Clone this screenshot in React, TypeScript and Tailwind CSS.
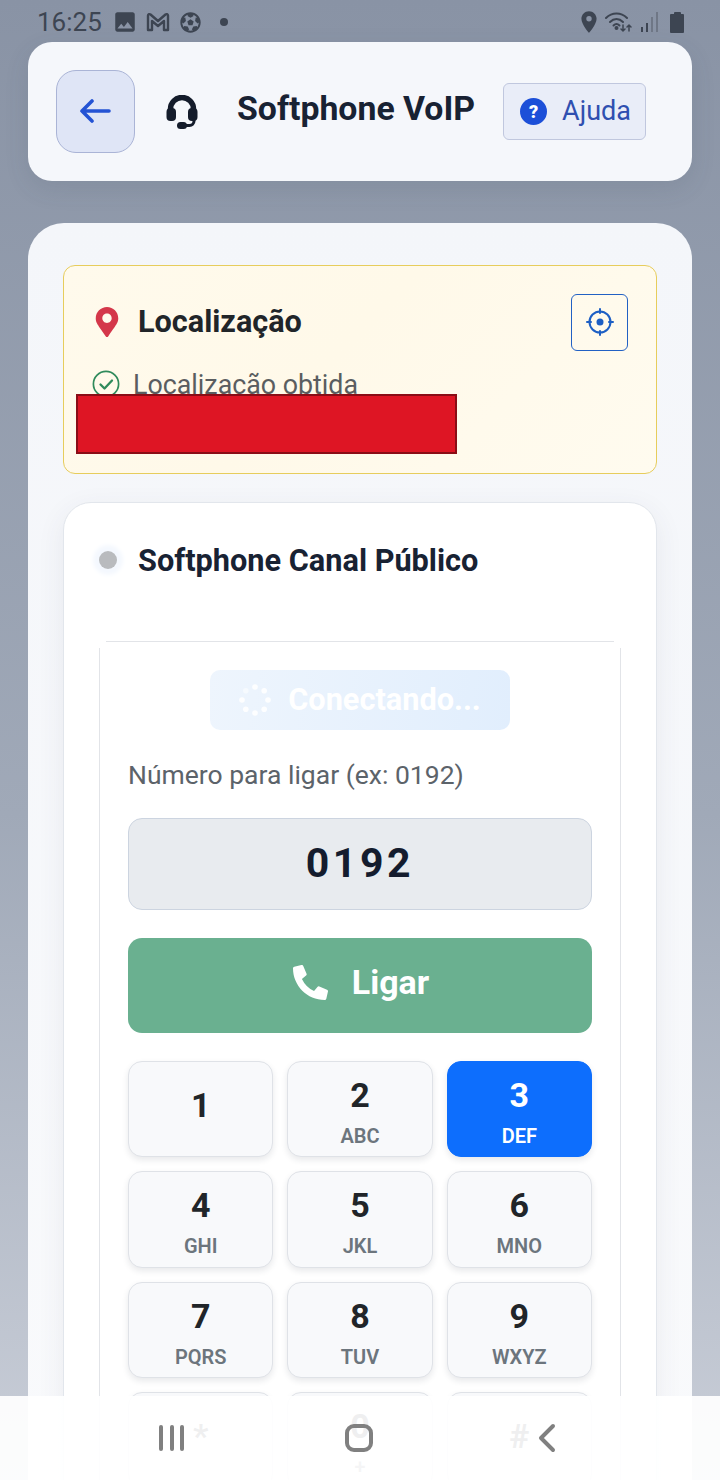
import { ChevronLeft } from "lucide-react";
import { FaFutbol, FaMapMarkerAlt, FaPhoneAlt } from "react-icons/fa";
import { MdImage, MdLocationOn } from "react-icons/md";

const keys = [
  ["1", ""],
  ["2", "ABC"],
  ["3", "DEF"],
  ["4", "GHI"],
  ["5", "JKL"],
  ["6", "MNO"],
  ["7", "PQRS"],
  ["8", "TUV"],
  ["9", "WXYZ"],
  ["*", ""],
  ["0", "+"],
  ["#", ""],
];

function StatusBar() {
  return (
    <div className="flex h-[42px] items-start justify-between pl-[37px] pr-[36px] pt-[8px] text-[#3d4552]">
      <div className="flex items-center">
        <span className="text-[26px] leading-[28px]">16:25</span>
        <MdImage className="ml-[10px] h-[26px] w-[26px]" aria-hidden />
        <svg viewBox="0 0 24 20" className="ml-[8px] h-[20px] w-[24px]" fill="none" stroke="currentColor" strokeWidth="2.4" strokeLinejoin="round" aria-hidden>
          <path d="M2 18V3.5a1.5 1.5 0 0 1 2.5-1L12 9l7.5-6.5a1.5 1.5 0 0 1 2.5 1V18h-4V9l-6 5-6-5v9z" />
        </svg>
        <FaFutbol className="ml-[10px] h-[21px] w-[21px]" aria-hidden />
        <span className="ml-[19px] h-[8px] w-[8px] rounded-full bg-[#3d4552]" />
      </div>
      <div className="flex items-center pt-[1px]">
        <MdLocationOn className="h-[26px] w-[26px]" aria-hidden />
        <svg viewBox="0 0 28 22" className="ml-[3px] h-[22px] w-[28px]" fill="none" stroke="currentColor" strokeWidth="2" strokeLinecap="round" aria-hidden>
          <path d="M1 7c6-6 15-6 21 0" />
          <path d="M5 11c4-4 9-4 13 0" />
          <path d="M8.500 14.500c2-2 4-2 6 0" />
          <circle cx="11.500" cy="17" r="1" fill="currentColor" />
          <path d="M18 14v6M16 18l2 2 2-2" strokeWidth="1.500" />
          <path d="M24 20v-6M22 16l2-2 2 2" strokeWidth="1.500" />
        </svg>
        <svg viewBox="0 0 20 22" className="ml-[7px] h-[22px] w-[20px]" aria-hidden>
          <rect x="1" y="16" width="2" height="5" fill="#3d4552" />
          <rect x="6" y="12" width="2" height="9" fill="#3d4552" />
          <rect x="11" y="6" width="2" height="15" fill="#6f7786" />
          <rect x="16" y="1" width="2" height="20" fill="#6f7786" />
        </svg>
        <div className="ml-[10px] flex flex-col items-center">
          <span className="h-[2px] w-[7px] rounded-t-[1px] bg-[#3d4552]" />
          <span className="h-[19px] w-[14px] rounded-[1px] bg-[#3d4552]" />
        </div>
      </div>
    </div>
  );
}

function Header() {
  return (
    <header className="mx-[28px] flex h-[139px] items-center rounded-[24px] bg-[#f5f7fb] pl-[28px] shadow-[0_8px_24px_rgba(60,70,90,0.12)]">
      <button className="flex h-[83px] w-[79px] items-center justify-center rounded-[20px] border border-[#aab4d6] bg-[#dfe5f6] pb-[2px] pr-[2px] text-[#2453d4]">
        <svg viewBox="0 0 32 24" className="h-[24px] w-[32px]" fill="none" stroke="currentColor" strokeWidth="3.600" strokeLinecap="round" strokeLinejoin="round" aria-hidden>
          <path d="M30 12H3M13 2 3 12l10 10" />
        </svg>
      </button>
      <svg viewBox="0 0 32 34" className="ml-[31px] h-[34px] w-[32px] text-[#141c2b]" fill="none" stroke="currentColor" aria-hidden>
        <path d="M4.500 18v-4a11.500 11.500 0 0 1 23 0v4" strokeWidth="5.500" />
        <rect x="0.500" y="13" width="9.500" height="13" rx="4" fill="currentColor" stroke="none" />
        <rect x="22" y="13" width="9.500" height="13" rx="4" fill="currentColor" stroke="none" />
        <path d="M28 24v2a4.500 4.500 0 0 1-4.500 4.500H18" strokeWidth="3" />
        <rect x="11" y="27" width="10" height="7" rx="3.500" fill="currentColor" stroke="none" />
      </svg>
      <h1 className="mb-[6px] ml-[39px] whitespace-nowrap text-[33.800px] font-bold leading-none text-[#182233]">Softphone VoIP</h1>
      <button className="ml-[28px] flex h-[57px] w-[143px] items-center rounded-[6px] border border-[#c0c7de] bg-[#e9edf8] pl-[16px] text-[#2f4fb0]">
        <span className="flex h-[27px] w-[27px] items-center justify-center rounded-full bg-[#1c4fd8] text-[18px] font-black leading-none text-white">?</span>
        <span className="ml-[15px] text-[27px] leading-none">Ajuda</span>
      </button>
    </header>
  );
}

function LocationCard() {
  return (
    <section className="relative h-[209px] rounded-[12px] border border-[#e7cd5c] bg-[linear-gradient(135deg,#fffaec,#fff9e9_45%,#fffbef)] pl-[28px] pr-[28px] pt-[28px]">
      <div className="flex items-start justify-between">
        <div className="flex h-[56px] items-center pl-[3px]">
          <FaMapMarkerAlt className="h-[30px] w-[24px] text-[#d4374a]" aria-hidden />
          <h2 className="ml-[19px] text-[30.600px] font-bold leading-none text-[#212529]">Localização</h2>
        </div>
        <button className="flex h-[57px] w-[57px] items-center justify-center rounded-[6px] border border-[#2261c4] pb-[2px] text-[#1d5fc4]">
          <svg viewBox="0 0 28 28" className="h-[28px] w-[28px]" fill="none" stroke="currentColor" strokeWidth="2" strokeLinecap="round" aria-hidden>
            <circle cx="14" cy="14" r="10.500" />
            <circle cx="14" cy="14" r="3.500" fill="currentColor" stroke="none" />
            <path d="M14 1v4M14 23v4M1 14h4M23 14h4" />
          </svg>
        </button>
      </div>
      <div className="mt-[19px] flex items-center">
        <svg viewBox="0 0 28 28" className="-mt-[2px] h-[28px] w-[28px] text-[#2f8a5b]" fill="none" stroke="currentColor" strokeLinecap="round" strokeLinejoin="round" aria-hidden>
          <circle cx="14" cy="14" r="12.600" strokeWidth="1.700" />
          <path d="M8.500 14.500l4 4 7.500-8" strokeWidth="2.300" />
        </svg>
        <span className="ml-[13px] text-[26.800px] leading-[30px] text-[#5a5d60]">Localização obtida</span>
      </div>
      <div className="absolute left-[12px] top-[128px] h-[60px] w-[381px] border-2 border-[#8a0d16] bg-[#de1524]" />
    </section>
  );
}

function Spinner() {
  const dots = [0, 45, 90, 135, 180, 225, 270, 315];
  return (
    <svg viewBox="0 0 32 32" className="h-[32px] w-[32px]" aria-hidden>
      {dots.map((deg) => (
        <circle
          key={deg}
          cx={16 + 13 * Math.cos((deg * Math.PI) / 180)}
          cy={16 + 13 * Math.sin((deg * Math.PI) / 180)}
          r="2.800"
          fill="#fff"
          opacity={deg === 225 ? 0.5 : 0.9}
        />
      ))}
    </svg>
  );
}

function Keypad() {
  return (
    <div className="mt-[28px] grid grid-cols-3 gap-[14px]">
      {keys.map(([digit, letters]) => {
        const active = digit === "3";
        return (
          <button
            key={digit}
            className={`flex h-[96.300px] flex-col items-center rounded-[14px] border shadow-[0_3px_6px_rgba(30,40,60,0.1)] ${
              letters ? "justify-start pt-[13px]" : "justify-center pb-[8px]"
            } ${active ? "border-[#0d6efd] bg-[#0d6efd] text-white" : "border-[#dfe2e7] bg-[#f8f9fb] text-[#212529]"}`}
          >
            <span className="text-[34px] font-bold leading-[40px]">{digit}</span>
            {letters ? (
              <span className={`mt-[9px] text-[20px] font-semibold leading-[24px] ${active ? "text-white" : "text-[#6c757d]"}`}>{letters}</span>
            ) : null}
          </button>
        );
      })}
    </div>
  );
}

function SoftphoneCard() {
  return (
    <section className="mt-[28px] rounded-t-[28px] border border-[#e2e6ec] bg-white pl-[35px] pr-[35px] pt-[38px] shadow-[0_8px_28px_rgba(60,70,90,0.08)]">
      <div className="flex h-[38px] items-center">
        <span className="h-[18px] w-[18px] rounded-full bg-[#b9bbbe] shadow-[0_0_4px_6px_#f4f8fe]" />
        <h2 className="ml-[21px] mt-[2px] text-[30.700px] font-bold leading-none text-[#182233]">Softphone Canal Público</h2>
      </div>
      <div className="relative mt-[62px] px-[29px] pb-[40px] pt-[29px]">
        <span className="absolute left-[7px] right-[7px] top-0 h-px bg-[#e2e4e8]" />
        <span className="absolute bottom-0 left-0 top-[7px] w-px bg-[#e2e4e8]" />
        <span className="absolute bottom-0 right-0 top-[7px] w-px bg-[#e2e4e8]" />
        <div className="mx-auto flex h-[60px] w-[300px] items-center justify-center rounded-[10px] bg-[linear-gradient(100deg,#eef5fd,#e1eefd)]">
          <Spinner />
          <span className="ml-[17px] text-[30.700px] font-bold leading-none text-white">Conectando...</span>
        </div>
        <div className="mt-[30px] text-[26.500px] leading-[30px] text-[#5c636a]">Número para ligar (ex: 0192)</div>
        <div className="mt-[28px] flex h-[92px] items-center justify-center rounded-[14px] border border-[#ccd4e0] bg-[#e8ebef] text-[41px] font-bold tracking-[3.600px] text-[#141c2e]">
          0192
        </div>
        <button className="mt-[28px] flex h-[95px] w-full items-center justify-center rounded-[14px] bg-[#6ab090] pb-[7px] pl-[2px] text-white">
          <FaPhoneAlt className="h-[35px] w-[35px]" aria-hidden />
          <span className="ml-[24px] text-[34px] font-bold leading-none">Ligar</span>
        </button>
        <Keypad />
      </div>
    </section>
  );
}

function NavBar() {
  return (
    <div className="absolute inset-x-0 bottom-0 flex h-[84px] items-center bg-white/[0.93] text-[#808080]">
      <div className="ml-[159px] flex h-[26px] gap-[6.500px]">
        <span className="h-full w-[4px] rounded-full bg-current" />
        <span className="h-full w-[4px] rounded-full bg-current" />
        <span className="h-full w-[4px] rounded-full bg-current" />
      </div>
      <div className="ml-[161px] h-[28px] w-[28px] rounded-[9px] border-[4px] border-current" />
      <ChevronLeft className="ml-[149.500px] h-[48px] w-[48px]" strokeWidth={2} aria-hidden />
    </div>
  );
}

export default function App() {
  return (
    <div
      className="relative h-[1480px] w-[720px] overflow-hidden bg-[linear-gradient(180deg,#8993a5_0%,#a0a9b8_55%,#c9ced8_100%)]"
      style={{ fontFamily: "Roboto, sans-serif" }}
    >
      <StatusBar />
      <Header />
      <main className="mx-[28px] mt-[42px] h-[1300px] rounded-t-[36px] bg-[linear-gradient(180deg,#f4f6fa,#f9fafc)] px-[35px] pt-[42px]">
        <LocationCard />
        <SoftphoneCard />
      </main>
      <NavBar />
    </div>
  );
}
